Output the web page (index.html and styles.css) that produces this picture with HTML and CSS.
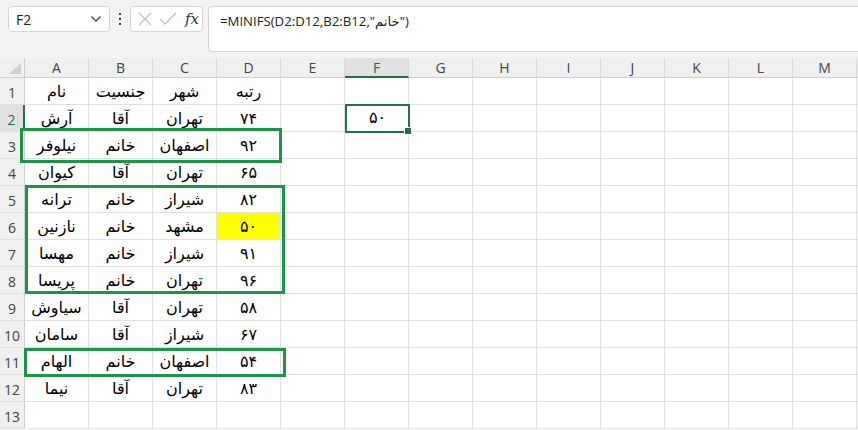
FILE: index.html
```html
<!DOCTYPE html>
<html lang="fa">
<head>
    <meta charset="UTF-8">
    <title>MINIFS</title>
    <link rel="stylesheet" href="styles.css">
</head>
<body>
    <div class="toolbar">
        <div class="name-box">
            <span>F2</span>
            <svg class="chevron" width="12" height="8" viewBox="0 0 12 8"><path d="M1.5 1.5 L6 6 L10.5 1.5" fill="none" stroke="#444" stroke-width="1.3"/></svg>
        </div>
        <div class="dots"><i></i><i></i><i></i></div>
        <div class="fx-box">
            <svg width="18" height="18" viewBox="0 0 18 18"><path d="M3 3 L15 15 M15 3 L3 15" stroke="#c4c4c4" stroke-width="1.4" fill="none"/></svg>
            <svg width="20" height="18" viewBox="0 0 20 18"><path d="M2 9 L7 14 L18 3" stroke="#c4c4c4" stroke-width="1.4" fill="none"/></svg>
            <span class="fx">fx</span>
        </div>
        <div class="formula">=MINIFS(D2:D12,B2:B12,"خانم")</div>
    </div>

    <div class="sheet">
        <div class="row head">
            <div class="corner"><svg width="14" height="12" viewBox="0 0 14 12"><path d="M13 0 L13 11 L1 11 Z" fill="#cfcfcf"/></svg></div>
            <div class="col">A</div><div class="col">B</div><div class="col">C</div><div class="col">D</div>
            <div class="col">E</div><div class="col active">F</div><div class="col">G</div><div class="col">H</div>
            <div class="col">I</div><div class="col">J</div><div class="col">K</div><div class="col">L</div><div class="col">M</div>
        </div>
        <div class="row"><div class="rh">1</div><div class="c">نام</div><div class="c">جنسیت</div><div class="c">شهر</div><div class="c">رتبه</div><div class="rest"></div></div>
        <div class="row"><div class="rh active">2</div><div class="c">آرش</div><div class="c">آقا</div><div class="c">تهران</div><div class="c">۷۴</div><div class="rest"></div></div>
        <div class="row"><div class="rh">3</div><div class="c">نیلوفر</div><div class="c">خانم</div><div class="c">اصفهان</div><div class="c">۹۲</div><div class="rest"></div></div>
        <div class="row"><div class="rh">4</div><div class="c">کیوان</div><div class="c">آقا</div><div class="c">تهران</div><div class="c">۶۵</div><div class="rest"></div></div>
        <div class="row"><div class="rh">5</div><div class="c">ترانه</div><div class="c">خانم</div><div class="c">شیراز</div><div class="c">۸۲</div><div class="rest"></div></div>
        <div class="row"><div class="rh">6</div><div class="c">نازنین</div><div class="c">خانم</div><div class="c">مشهد</div><div class="c min">۵۰</div><div class="rest"></div></div>
        <div class="row"><div class="rh">7</div><div class="c">مهسا</div><div class="c">خانم</div><div class="c">شیراز</div><div class="c">۹۱</div><div class="rest"></div></div>
        <div class="row"><div class="rh">8</div><div class="c">پریسا</div><div class="c">خانم</div><div class="c">تهران</div><div class="c">۹۶</div><div class="rest"></div></div>
        <div class="row"><div class="rh">9</div><div class="c">سیاوش</div><div class="c">آقا</div><div class="c">تهران</div><div class="c">۵۸</div><div class="rest"></div></div>
        <div class="row"><div class="rh">10</div><div class="c">سامان</div><div class="c">آقا</div><div class="c">شیراز</div><div class="c">۶۷</div><div class="rest"></div></div>
        <div class="row"><div class="rh">11</div><div class="c">الهام</div><div class="c">خانم</div><div class="c">اصفهان</div><div class="c">۵۴</div><div class="rest"></div></div>
        <div class="row"><div class="rh">12</div><div class="c">نیما</div><div class="c">آقا</div><div class="c">تهران</div><div class="c">۸۳</div><div class="rest"></div></div>
        <div class="row"><div class="rh">13</div><div class="c"></div><div class="c"></div><div class="c"></div><div class="c"></div><div class="rest"></div></div>

        <!-- selection and highlight boxes drawn over the grid -->
        <div class="selection">۵۰<span class="handle"></span></div>
        <div class="mark mark-3"></div>
        <div class="mark mark-5"></div>
        <div class="mark mark-11"></div>
    </div>
</body>
</html>
```

FILE: styles.css
```css
body {
    margin: 0;
    background: #ffffff;
    font-family: "Liberation Sans", "DejaVu Sans", sans-serif;
    overflow: hidden;
}
.toolbar {
    height: 58px;
    box-sizing: border-box;
    background: #f3f3f3;
    display: flex;
    align-items: flex-start;
    padding: 6px 0 0 8px;
}
.name-box {
    width: 102px;
    height: 26px;
    box-sizing: border-box;
    background: white;
    border: 1px solid #d6d6d6;
    border-radius: 4px;
    display: flex;
    align-items: center;
    justify-content: space-between;
    padding: 0 7px 0 7px;
    font-family: "Open Sans", sans-serif;
    font-size: 14px;
    color: #222;
}
.dots {
    width: 20px;
    height: 26px;
    display: flex;
    flex-direction: column;
    align-items: center;
    justify-content: center;
    gap: 3px;
}
.dots i {
    width: 2px;
    height: 2px;
    background: #444;
    display: block;
}
.fx-box {
    width: 73px;
    height: 26px;
    box-sizing: border-box;
    background: white;
    border: 1px solid #d6d6d6;
    border-radius: 4px;
    display: flex;
    align-items: center;
    gap: 4px;
    padding-left: 5px;
}
.fx {
    font-family: "DejaVu Serif", "Liberation Serif", serif;
    font-style: italic;
    font-size: 15px;
    color: #333;
    margin-left: 3px;
}
.formula {
    flex: 1;
    height: 46px;
    box-sizing: border-box;
    margin-left: 5px;
    background: white;
    border: 1px solid #d6d6d6;
    border-right: none;
    border-radius: 4px 0 0 4px;
    padding: 5px 0 0 11px;
    font-family: "Open Sans", "DejaVu Sans", sans-serif;
    font-size: 13.2px;
    color: #222;
}
.sheet {
    position: relative;
}
.row {
    display: flex;
    height: 27px;
    box-sizing: border-box;
    border-bottom: 1px solid #e1e1e1;
}
.row.head {
    height: 20px;
    background: #f0f0f0;
    border-bottom: 1px solid #cfcfcf;
}
.corner {
    width: 25px;
    box-sizing: border-box;
    border-right: 1px solid #cfcfcf;
    display: flex;
    align-items: flex-end;
    justify-content: flex-end;
    padding: 0 2px 2px 0;
}
.col {
    width: 64px;
    box-sizing: border-box;
    border-right: 1px solid #dadada;
    text-align: center;
    font-family: "Open Sans", sans-serif;
    font-size: 14px;
    line-height: 20px;
    color: #444;
}
.col.active {
    background: #e1e1e1;
    color: #217346;
    border-bottom: 2px solid #217346;
    margin-bottom: -1px;
}
.rh {
    width: 25px;
    box-sizing: border-box;
    background: #f0f0f0;
    border-right: 1px solid #cfcfcf;
    text-align: center;
    font-family: "Open Sans", sans-serif;
    font-size: 14px;
    line-height: 24px;
    padding-top: 3px;
    color: #444;
}
.rh.active {
    background: #e1e1e1;
    color: #217346;
    border-right: 2px solid #217346;
}
.c {
    width: 64px;
    box-sizing: border-box;
    border-right: 1px solid #e1e1e1;
    text-align: center;
    font-size: 16px;
    line-height: 24px;
    padding-top: 2px;
    color: #000;
}
.c.min {
    background: #ffff00;
}
.rest {
    flex: 1;
    background-image: linear-gradient(to right, transparent 63px, #e1e1e1 63px);
    background-size: 64px 100%;
}
.selection {
    position: absolute;
    left: 345px;
    top: 46px;
    width: 65px;
    height: 29px;
    box-sizing: border-box;
    border: 2px solid #217346;
    text-align: center;
    font-size: 16px;
    line-height: 24px;
    background: white;
}
.handle {
    position: absolute;
    right: -4px;
    bottom: -4px;
    width: 6px;
    height: 6px;
    background: #217346;
    border: 1px solid white;
}
.mark {
    position: absolute;
    box-sizing: border-box;
    border: 3px solid #1a9648;
}
.mark-3 {
    left: 20px;
    top: 70px;
    width: 262px;
    height: 35px;
}
.mark-5 {
    left: 25px;
    top: 127px;
    width: 260px;
    height: 109px;
}
.mark-11 {
    left: 24px;
    top: 290px;
    width: 262px;
    height: 29px;
}
```
